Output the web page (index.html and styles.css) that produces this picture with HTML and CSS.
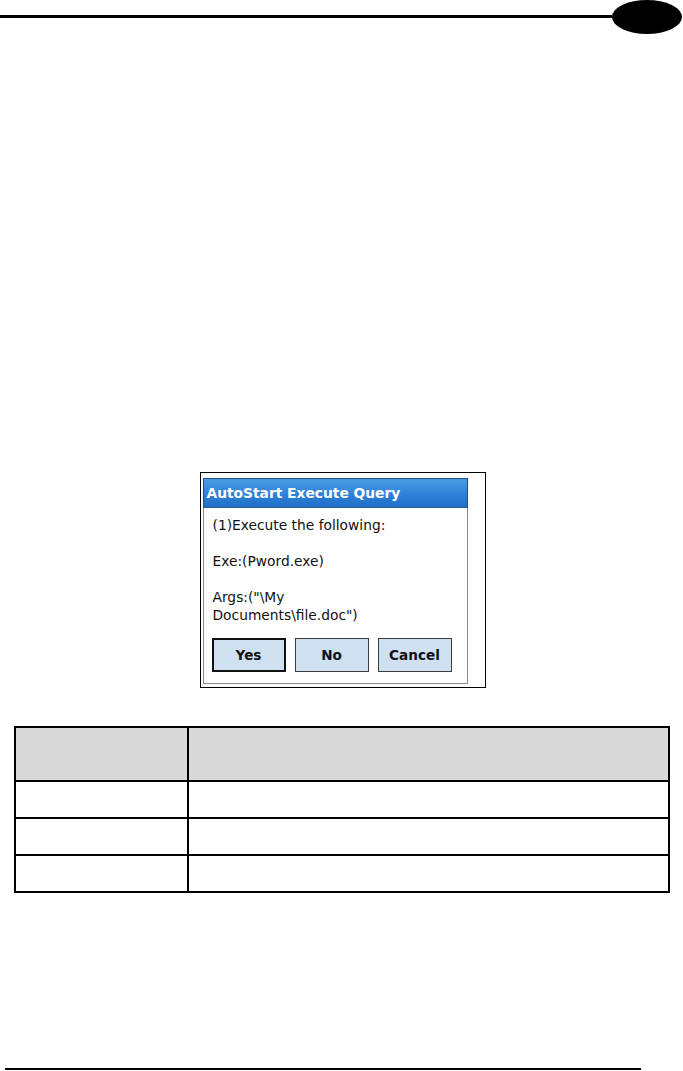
FILE: index.html
```html
<!DOCTYPE html>
<html lang="en">
<head>
  <meta charset="UTF-8" />
  <title>AutoStart Execute Query</title>
  <link rel="stylesheet" href="styles.css">
</head>
<body>
  <div class="page-header">
    <div class="header-rule"></div>
    <div class="chapter-tab"></div>
  </div>

  <div class="figure">
    <div class="dialog">
      <div class="dialog-title">AutoStart Execute Query</div>
      <div class="dialog-body">
        <p>(1)Execute the following:</p>
        <p>Exe:(Pword.exe)</p>
        <p>Args:("\My<br>Documents\file.doc")</p>
        <div class="dialog-buttons">
          <button class="btn btn-default">Yes</button>
          <button class="btn">No</button>
          <button class="btn">Cancel</button>
        </div>
      </div>
    </div>
  </div>

  <table class="info-table">
    <tr class="head-row">
      <th class="col-key"></th>
      <th></th>
    </tr>
    <tr><td></td><td></td></tr>
    <tr><td></td><td></td></tr>
    <tr><td></td><td></td></tr>
  </table>

  <div class="page-footer">
    <div class="footer-rule"></div>
  </div>
</body>
</html>
```

FILE: styles.css
```css
body {
  margin: 0;
  background: #ffffff;
  font-family: 'DejaVu Sans', sans-serif;
  width: 683px;
  height: 1071px;
  overflow: hidden;
}

/* top running header */
.page-header {
  display: flex;
  align-items: center;
  height: 34px;
}

.header-rule {
  flex: 1;
  height: 3px;
  background: #000;
  margin-top: -1px;
}

.chapter-tab {
  width: 70px;
  height: 34px;
  margin-right: 1px;
  background: #000;
  border-radius: 50%;
}

/* screenshot figure */
.figure {
  width: 265px;
  margin: 438px auto 0;
  padding: 5px 17px 3px 2px;
  border: 1px solid #000;
  transform: translateX(1px);
}

.dialog {
  background: #fff;
}

.dialog-title {
  height: 30px;
  line-height: 29px;
  padding-left: 3px;
  color: #fff;
  font-weight: bold;
  font-size: 13.8px;
  background: linear-gradient(to bottom, #4b9be6, #2c7fd6 60%, #1f6fc6);
  border: 1px solid #1a4f8a;
  border-bottom-color: #2c5f99;
  box-sizing: border-box;
}

.dialog-body {
  border: 1px solid #8a8a8a;
  border-top: none;
  padding: 8px 9px 11px 9px;
  font-size: 13.8px;
  color: #111;
}

.dialog-body p {
  margin: 0 0 18px;
  line-height: 18px;
}

.dialog-body p:last-of-type {
  margin-bottom: 14px;
}

.dialog-buttons {
  display: flex;
  gap: 9px;
  margin-left: -1px;
}

.btn {
  width: 74px;
  height: 34px;
  padding: 0;
  background: #cfe0f1;
  border: 1px solid #3c3c3c;
  font-family: 'DejaVu Sans', sans-serif;
  font-weight: bold;
  font-size: 13.6px;
  color: #111;
}

.btn-default {
  border: 2px solid #111;
}

/* parameter table */
.info-table {
  margin: 38px 0 0 14px;
  width: 656px;
  border-collapse: collapse;
}

.info-table th,
.info-table td {
  border: 2px solid #000;
  height: 35px;
  padding: 0;
}

.head-row th {
  height: 52px;
  background: #d9d9d9;
}

.col-key {
  width: 171px;
}

/* bottom running footer */
.page-footer {
  margin-top: 175px;
  padding-left: 5px;
}

.footer-rule {
  width: 636px;
  height: 2px;
  background: #000;
}
```
